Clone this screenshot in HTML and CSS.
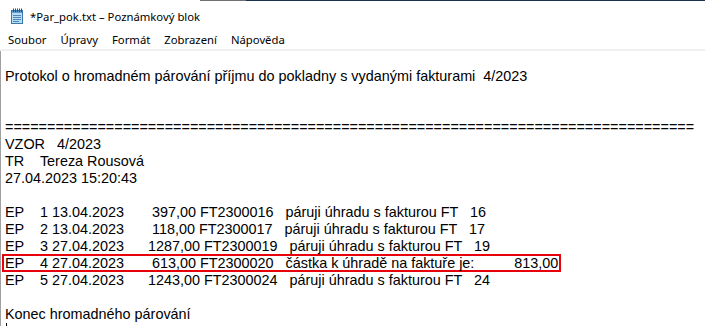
FILE: index.html
```html
<!DOCTYPE html>
<html lang="cs">
  <head>
    <meta charset="UTF-8" />
    <meta name="viewport" content="width=device-width, initial-scale=1.0" />
    <title>*Par_pok.txt – Poznámkový blok</title>
    <link rel="stylesheet" href="styles.css">
  </head>
  <body>
    <div class="window">
      <!-- horní okraj okna -->
      <div class="topline">
        <span class="seg-white"></span>
        <span class="seg-gray"></span>
        <span class="seg-navy"></span>
      </div>

      <div class="titlebar">
        <svg class="app-icon" width="16" height="16" viewBox="0 0 16 16">
          <rect x="2.5" y="2.5" width="11" height="13" fill="#b9dcf2" stroke="#3a78ad" />
          <rect x="3" y="3" width="10" height="2" fill="#5d9ccd" />
          <line x1="4" y1="7.5" x2="12" y2="7.5" stroke="#4f86b8" />
          <line x1="4" y1="9.5" x2="12" y2="9.5" stroke="#4f86b8" />
          <line x1="4" y1="11.5" x2="12" y2="11.5" stroke="#4f86b8" />
          <line x1="4" y1="13.5" x2="10" y2="13.5" stroke="#4f86b8" />
          <g stroke="#2f4f6e" stroke-width="1">
            <line x1="4.5" y1="0.5" x2="4.5" y2="4" />
            <line x1="6.5" y1="0.5" x2="6.5" y2="4" />
            <line x1="8.5" y1="0.5" x2="8.5" y2="4" />
            <line x1="10.5" y1="0.5" x2="10.5" y2="4" />
            <line x1="12.5" y1="0.5" x2="12.5" y2="4" />
          </g>
        </svg>
        <span class="title">*Par_pok.txt – Poznámkový blok</span>
      </div>

      <div class="menubar">
        <span class="menu-item">Soubor</span>
        <span class="menu-item">Úpravy</span>
        <span class="menu-item">Formát</span>
        <span class="menu-item">Zobrazení</span>
        <span class="menu-item">Nápověda</span>
      </div>

      <div class="editor">
        <div class="text">
          <div class="ln"></div>
          <div class="ln">Protokol o hromadném párování příjmu do pokladny s vydanými fakturami  4/2023</div>
          <div class="ln"></div>
          <div class="ln"></div>
          <div class="ln">==================================================================================</div>
          <div class="ln">VZOR   4/2023</div>
          <div class="ln">TR    Tereza Rousová</div>
          <div class="ln">27.04.2023 15:20:43</div>
          <div class="ln"></div>
          <div class="ln">EP    1 13.04.2023       397,00 FT2300016   páruji úhradu s fakturou FT   16</div>
          <div class="ln">EP    2 13.04.2023       118,00 FT2300017   páruji úhradu s fakturou FT   17</div>
          <div class="ln">EP    3 27.04.2023      1287,00 FT2300019   páruji úhradu s fakturou FT   19</div>
          <div class="ln mark">EP    4 27.04.2023       613,00 FT2300020   částka k úhradě na faktuře je:          813,00</div>
          <div class="ln">EP    5 27.04.2023      1243,00 FT2300024   páruji úhradu s fakturou FT   24</div>
          <div class="ln"></div>
          <div class="ln">Konec hromadného párování</div>
          <div class="ln"><span class="caret"></span></div>
        </div>
      </div>
    </div>
  </body>
</html>
```

FILE: styles.css
```css
body {
  margin: 0;
  padding: 0;
  background-color: white;
  overflow: hidden;
}

.window {
  width: 705px;
  height: 326px;
  display: flex;
  flex-direction: column;
  background-color: white;
}

.topline {
  display: flex;
  height: 1px;
  flex: 0 0 1px;
}

.seg-white {
  width: 200px;
}

.seg-gray {
  width: 46px;
  background-color: #707070;
}

.seg-navy {
  flex: 1;
  background-color: #1c3150;
}

.titlebar {
  display: flex;
  align-items: center;
  height: 29px;
  padding-left: 9px;
  font-family: "Noto Sans", sans-serif;
  font-size: 11.3px;
  color: #000;
}

.app-icon {
  margin-right: 5px;
}

.title {
  position: relative;
  top: 1px;
}

.menubar {
  display: flex;
  gap: 14px;
  height: 19px;
  align-items: center;
  padding-left: 8px;
  font-family: "Noto Sans", sans-serif;
  font-size: 11.3px;
  color: #000;
  border-bottom: 2px solid #f0f0f0;
}

.editor {
  flex: 1;
  border-left: 1px solid #a0a0a0;
  padding-left: 4px;
  overflow: hidden;
}

.text {
  font-family: "Liberation Sans", Arial, sans-serif;
  font-size: 14.4px;
  line-height: 17px;
  color: #000;
}

.ln {
  height: 17px;
  white-space: pre;
}

.ln.mark {
  width: 559px;
  height: 18px;
  margin-top: -1px;
  margin-left: -3px;
  padding-left: 3px;
  padding-top: 1px;
  box-sizing: border-box;
  box-shadow: inset 0 0 0 2px #e8000b;
}

.caret {
  display: inline-block;
  width: 1px;
  height: 17px;
  margin-left: 1px;
  background-color: #000;
  vertical-align: top;
}
```
